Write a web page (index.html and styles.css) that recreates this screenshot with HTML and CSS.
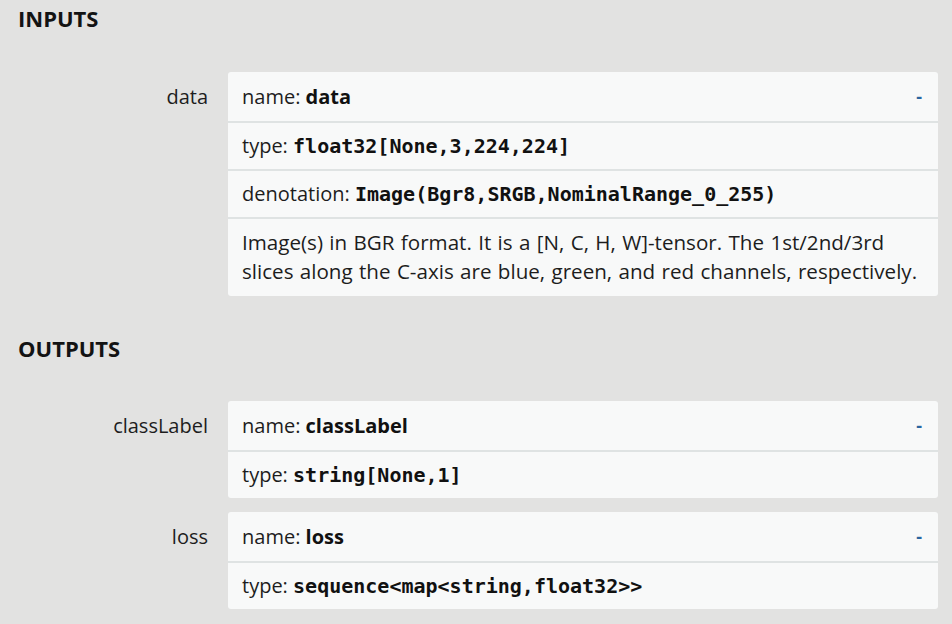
FILE: index.html
```html
<!DOCTYPE html>
<html>
<head>
<meta charset="utf-8">
<link rel="stylesheet" href="styles.css">
</head>
<body>
<div class="sidebar">
  <div class="section-header">INPUTS</div>
  <div class="item">
    <div class="item-name">data</div>
    <div class="item-values">
      <div class="card">
        <div class="line first">name: <b>data</b><span class="expander">-</span></div>
        <div class="line">type: <code>float32[None,3,224,224]</code></div>
        <div class="line">denotation: <code>Image(Bgr8,SRGB,NominalRange_0_255)</code></div>
        <div class="line description">Image(s) in BGR format. It is a [N, C, H, W]-tensor. The 1st/2nd/3rd slices along the C-axis are blue, green, and red channels, respectively.</div>
      </div>
    </div>
  </div>

  <div class="section-header outputs">OUTPUTS</div>
  <div class="item">
    <div class="item-name">classLabel</div>
    <div class="item-values">
      <div class="card">
        <div class="line first">name: <b>classLabel</b><span class="expander">-</span></div>
        <div class="line">type: <code>string[None,1]</code></div>
      </div>
    </div>
  </div>
  <div class="item">
    <div class="item-name">loss</div>
    <div class="item-values">
      <div class="card">
        <div class="line first">name: <b>loss</b><span class="expander">-</span></div>
        <div class="line">type: <code>sequence&lt;map&lt;string,float32&gt;&gt;</code></div>
      </div>
    </div>
  </div>
</div>
</body>
</html>
```
FILE: styles.css
```css
html, body {
  margin: 0;
  padding: 0;
  background: #e2e2e1;
}
body {
  font-family: "Open Sans", "Noto Sans", sans-serif;
  font-size: 20px;
  color: #1d1d1d;
  overflow: hidden;
}
.sidebar {
  padding: 0 14px 0 18px;
}
.section-header {
  font-weight: bold;
  font-size: 22px;
  line-height: 36px;
  color: #131313;
  margin-bottom: 36px;
}
.section-header.outputs {
  margin-top: 34px;
  margin-bottom: 35px;
}
.item {
  display: flex;
  align-items: flex-start;
  margin-bottom: 14px;
}
.item-name {
  width: 190px;
  flex: none;
  text-align: right;
  padding-top: 10px;
  line-height: 29px;
  color: #1d1d1d;
}
.item-values {
  flex: 1;
  margin-left: 20px;
}
.card {
  background: #f8f9f9;
  border-radius: 3px;
}
.line {
  padding: 8px 14px 9px 14px;
  line-height: 29px;
  border-top: 2px solid #dfe3e3;
}
.line.first {
  border-top: none;
  padding-top: 10px;
  padding-bottom: 10px;
}
.line.description {
  font-size: 20.6px;
  word-spacing: 1px;
  padding-top: 9px;
  padding-bottom: 10px;
}
.line b {
  font-weight: bold;
  color: #111;
}
code {
  font-family: "DejaVu Sans Mono", "Liberation Mono", monospace;
  font-weight: bold;
  font-size: 20px;
  line-height: 1;
  color: #111;
}
.expander {
  float: right;
  color: #2a66a0;
  font-weight: bold;
  font-size: 18px;
  line-height: 29px;
  margin-right: 2px;
}
```
